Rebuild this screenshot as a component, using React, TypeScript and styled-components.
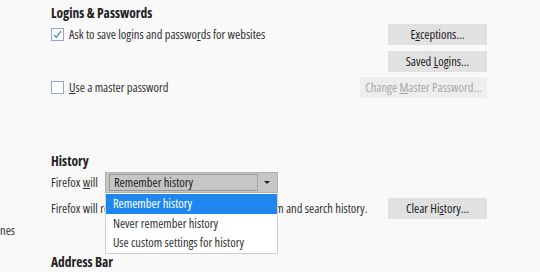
import * as React from 'react';
import styled, {createGlobalStyle} from 'styled-components';

const GlobalStyle = createGlobalStyle`
  html, body {
    margin: 0;
    padding: 0;
    background: #f9f9f9;
  }
  body {
    font-family: "Open Sans", sans-serif;
    font-stretch: 75%;
    font-size: 12.5px;
    color: #333;
  }
`;

const historyOptions = ['Remember history', 'Never remember history', 'Use custom settings for history'];

export default function App() {
    return (
        <>
            <GlobalStyle/>
            <Page>
                <Sidebar>
                    <NavItem>nes</NavItem>
                </Sidebar>
                <Main>
                    <Heading>Logins &amp; Passwords</Heading>
                    <SettingRow>
                        <CheckRow>
                            <CheckBox checked/>
                            <span>Ask to save logins and passwo<u>r</u>ds for websites</span>
                        </CheckRow>
                        <ButtonStack>
                            <Button>E<u>x</u>ceptions…</Button>
                            <Button>Saved <u>L</u>ogins…</Button>
                        </ButtonStack>
                    </SettingRow>
                    <SettingRow>
                        <CheckRow>
                            <CheckBox/>
                            <span><u>U</u>se a master password</span>
                        </CheckRow>
                        <Button disabled $wide>Change <u>M</u>aster Password…</Button>
                    </SettingRow>

                    <Heading $top={49}>History</Heading>
                    <SelectRow>
                        <span>Firefox <u>w</u>ill</span>
                        <Dropdown>
                            <Select>
                                <SelectValue>Remember history</SelectValue>
                                <SelectArrow/>
                            </Select>
                            <OptionList>
                                {historyOptions.map((option, i) => (
                                    <OptionItem key={option} $active={i === 0}>{option}</OptionItem>
                                ))}
                            </OptionList>
                        </Dropdown>
                    </SelectRow>
                    <SettingRow>
                        <Description>Firefox will remember your browsing, download, form and search history.</Description>
                        <Button>Clear Hi<u>s</u>tory…</Button>
                    </SettingRow>

                    <Heading $top={29}>Address Bar</Heading>
                </Main>
            </Page>
        </>
    );
}

const CheckBox = ({checked}: { checked?: boolean }) => (
    <Box>
        {checked && (
            <svg width="11" height="11" viewBox="0 0 11 11">
                <path d="M2 5.8 L4.3 8.3 L9 2.2" fill="none" stroke="#3b7ec4" strokeWidth="1.2"/>
            </svg>
        )}
    </Box>
);

const Page = styled.div`
  display: flex;
  width: 540px;
  height: 272px;
  overflow: hidden;
`;

const Sidebar = styled.nav`
  width: 51px;
  flex: none;
  padding-top: 222px;
  box-sizing: border-box;
`;

const NavItem = styled.div`
  line-height: 18px;
  color: #333;
`;

const Main = styled.main`
  width: 436px;
  flex: none;
  display: flex;
  flex-direction: column;
  padding-top: 4px;
`;

const Heading = styled.h2<{ $top?: number }>`
  margin: ${props => props.$top || 0}px 0 2px;
  font-size: 13.5px;
  line-height: 18px;
  font-weight: 700;
  color: #222;
  white-space: nowrap;
`;

const SettingRow = styled.div`
  display: flex;
  justify-content: space-between;
  align-items: flex-start;
  margin-bottom: 5px;
`;

const CheckRow = styled.label`
  display: flex;
  align-items: center;
  gap: 5px;
  height: 21px;
  white-space: nowrap;
`;

const Box = styled.span`
  width: 11px;
  height: 11px;
  border: 1px solid #8ea9c1;
  background: #fff;
  display: flex;
  align-items: center;
  justify-content: center;
`;

const ButtonStack = styled.div`
  display: flex;
  flex-direction: column;
  gap: 6px;
`;

const Button = styled.button<{ $wide?: boolean }>`
  width: ${props => props.$wide ? 127 : 99}px;
  height: 21px;
  padding: 0;
  border: none;
  background: #e1e1e1;
  color: #222;
  font-family: inherit;
  font-stretch: inherit;
  font-size: 12.5px;
  white-space: nowrap;

  &:disabled {
    background: #eeeeee;
    color: #a8a8a8;
  }
`;

const SelectRow = styled.div`
  display: flex;
  align-items: center;
  gap: 7px;
  margin-bottom: 5px;
`;

const Dropdown = styled.div`
  position: relative;
  width: 173px;
`;

const Select = styled.div`
  height: 21px;
  box-sizing: border-box;
  display: flex;
  padding: 1px 0 1px 3px;
  background: #c6c6c6;
  border: 1px solid #b0b0b0;
`;

const SelectValue = styled.div`
  flex: 1;
  display: flex;
  align-items: center;
  padding-left: 4px;
  border: 1px solid #969696;
  border-right-color: #a6a6a6;
  color: #222;
`;

const SelectArrow = styled.div`
  width: 19px;
  display: flex;
  align-items: center;
  justify-content: center;

  &::after {
    content: "";
    border-left: 3px solid transparent;
    border-right: 3px solid transparent;
    border-top: 3px solid #222;
  }
`;

const OptionList = styled.ul`
  position: absolute;
  top: 22px;
  left: 0;
  right: 0;
  margin: 0;
  padding: 0;
  list-style: none;
  background: #fff;
  border: 1px solid #cfcfcf;
  border-top: none;
`;

const OptionItem = styled.li<{ $active?: boolean }>`
  height: 19.5px;
  line-height: 19.5px;
  padding-left: 7px;
  white-space: nowrap;
  background: ${props => props.$active ? '#1e87ef' : '#fff'};
  color: ${props => props.$active ? '#fff' : '#333'};
`;

const Description = styled.div`
  height: 21px;
  line-height: 21px;
  white-space: nowrap;
`;
